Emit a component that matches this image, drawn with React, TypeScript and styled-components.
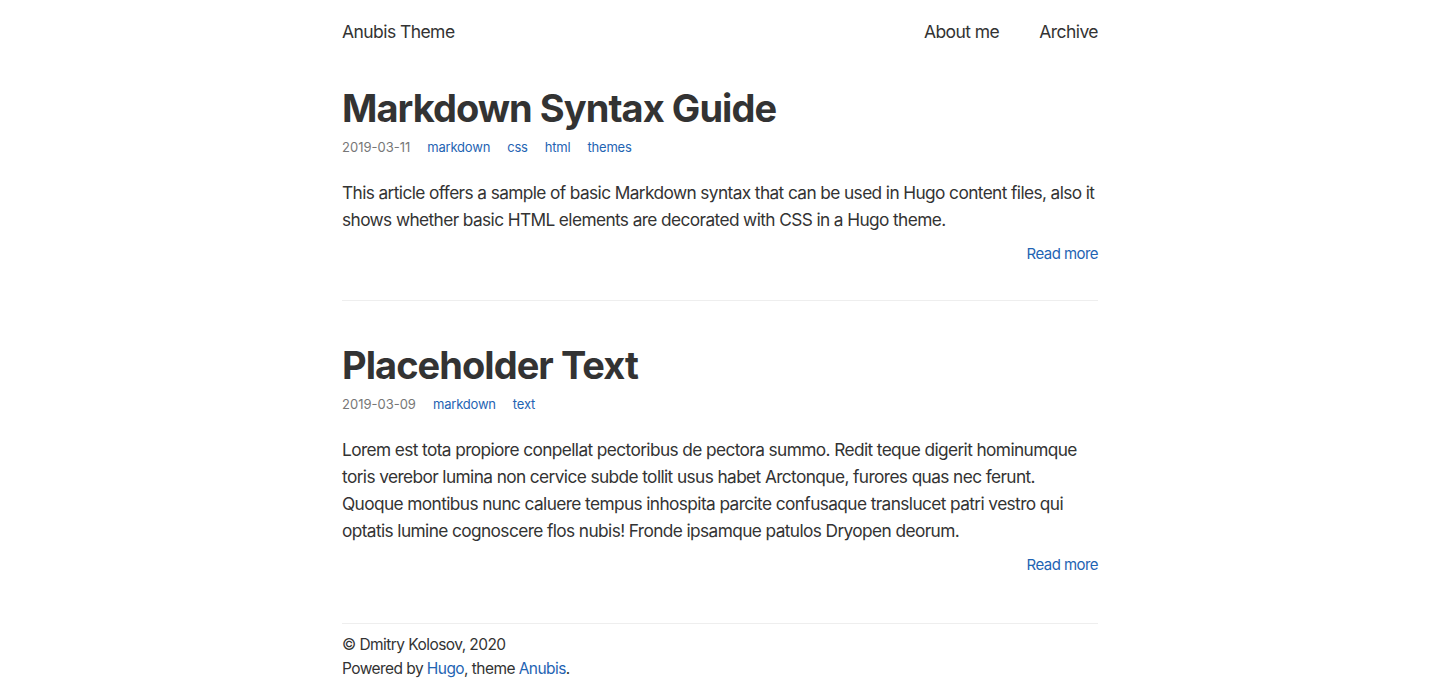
import styled, { createGlobalStyle } from 'styled-components';

const GlobalStyle = createGlobalStyle`
    body {
        margin: 0;
        background: #ffffff;
        color: #333333;
        font-family: Inter, "Noto Sans", sans-serif;
        letter-spacing: -0.035em;
        -webkit-font-smoothing: antialiased;
    }
    a {
        color: #1f64b3;
        text-decoration: none;
    }
`;

const posts = [
    {
        title: 'Markdown Syntax Guide',
        date: '2019-03-11',
        tags: ['markdown', 'css', 'html', 'themes'],
        summary:
            'This article offers a sample of basic Markdown syntax that can be used in Hugo content files, also it shows whether basic HTML elements are decorated with CSS in a Hugo theme.',
    },
    {
        title: 'Placeholder Text',
        date: '2019-03-09',
        tags: ['markdown', 'text'],
        summary:
            'Lorem est tota propiore conpellat pectoribus de pectora summo. Redit teque digerit hominumque toris verebor lumina non cervice subde tollit usus habet Arctonque, furores quas nec ferunt. Quoque montibus nunc caluere tempus inhospita parcite confusaque translucet patri vestro qui optatis lumine cognoscere flos nubis! Fronde ipsamque patulos Dryopen deorum.',
    },
];

const App = () => {
    return (
        <>
            <GlobalStyle />
            <Page>
                <Header>
                    <SiteTitle href="#">Anubis Theme</SiteTitle>
                    <Nav>
                        <NavLink href="#">About me</NavLink>
                        <NavLink href="#">Archive</NavLink>
                    </Nav>
                </Header>
                <main>
                    {posts.map((post, idx) => (
                        <Article key={post.title} $last={idx === posts.length - 1}>
                            <Title>{post.title}</Title>
                            <Meta>
                                <DateText>{post.date}</DateText>
                                {post.tags.map((tag) => (
                                    <TagLink key={tag} href="#">{tag}</TagLink>
                                ))}
                            </Meta>
                            <Summary>{post.summary}</Summary>
                            <ReadMoreRow>
                                <a href="#">Read more</a>
                            </ReadMoreRow>
                        </Article>
                    ))}
                </main>
                <Footer>
                    <div>© Dmitry Kolosov, 2020</div>
                    <div>
                        Powered by <a href="#">Hugo</a>, theme <a href="#">Anubis</a>.
                    </div>
                </Footer>
            </Page>
        </>
    );
};

const Page = styled.div`
    width: 756px;
    margin: 0 auto;
`;

const Header = styled.header`
    display: flex;
    justify-content: space-between;
    align-items: center;
    height: 62px;
    font-size: 17.5px;
`;

const SiteTitle = styled.a`
    && {
        color: #333333;
    }
`;

const Nav = styled.nav`
    display: flex;
    gap: 40px;
`;

const NavLink = styled.a`
    && {
        color: #333333;
    }
`;

const Article = styled.article<{ $last: boolean }>`
    padding-top: 20px;
    padding-bottom: ${(p) => (p.$last ? '45px' : '33px')};
    border-bottom: 1px solid #eeeeee;
    & + & {
        padding-top: 38px;
    }
`;

const Title = styled.h1`
    margin: 0;
    font-size: 38px;
    line-height: 52px;
    font-weight: 700;
    letter-spacing: -0.025em;
    color: #333333;
`;

const Meta = styled.div`
    display: flex;
    gap: 17px;
    font-size: 13px;
    line-height: 22px;
    letter-spacing: -0.015em;
    margin-top: 2px;
`;

const DateText = styled.span`
    color: #777777;
    letter-spacing: 0;
`;

const TagLink = styled.a``;

const Summary = styled.p`
    margin: 21px 0 0;
    font-size: 17.3px;
    line-height: 27px;
    letter-spacing: -0.035em;
`;

const ReadMoreRow = styled.div`
    display: flex;
    justify-content: flex-end;
    margin-top: 7px;
    font-size: 15px;
    line-height: 27px;
`;

const Footer = styled.footer`
    padding-top: 9px;
    font-size: 15.5px;
    line-height: 24px;
`;

export default App;
